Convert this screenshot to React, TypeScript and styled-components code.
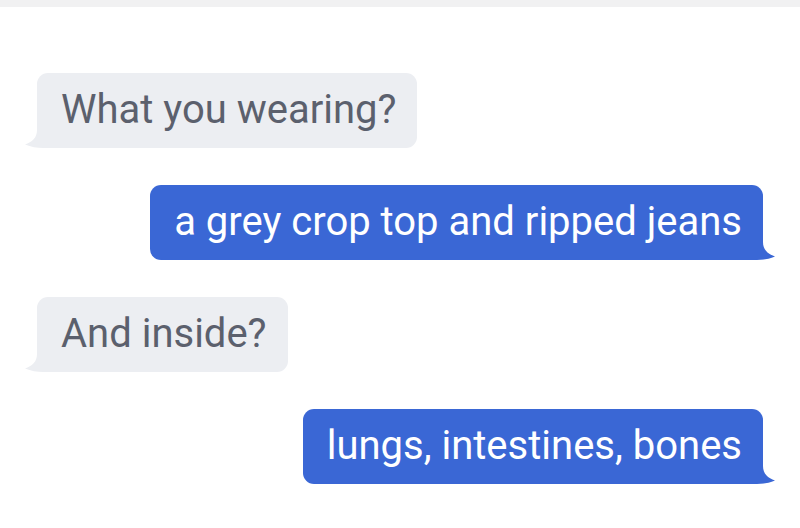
import styled, { createGlobalStyle } from "styled-components";

const GlobalStyle = createGlobalStyle`
  html, body {
    margin: 0;
    padding: 0;
    background: #ffffff;
  }
  body {
    font-family: Roboto, "Liberation Sans", sans-serif;
  }
`;

const Page = styled.div`
  width: 800px;
  height: 528px;
  overflow: hidden;
  background: #ffffff;
  display: flex;
  flex-direction: column;
`;

const TopStrip = styled.div`
  height: 7px;
  background: #f1f1f2;
`;

const Thread = styled.div`
  display: flex;
  flex-direction: column;
  gap: 37px;
  padding: 66px 37px 0 37px;
`;

const Row = styled.div<{ $mine?: boolean }>`
  display: flex;
  justify-content: ${(p) => (p.$mine ? "flex-end" : "flex-start")};
`;

const Bubble = styled.div<{ $mine?: boolean }>`
  position: relative;
  height: 75px;
  box-sizing: border-box;
  display: flex;
  align-items: center;
  padding: 0 21px 2px 24px;
  border-radius: 11px;
  font-size: 40px;
  white-space: nowrap;
  background: ${(p) => (p.$mine ? "#3a67d5" : "#eceef2")};
  color: ${(p) => (p.$mine ? "#ffffff" : "#5b606d")};
`;

const Text = styled.span`
  position: relative;
  z-index: 1;
`;

const TailSvg = styled.svg<{ $mine?: boolean }>`
  position: absolute;
  bottom: 0;
  width: 24px;
  height: 18px;
  ${(p) => (p.$mine ? "right: -12px; transform: scaleX(-1);" : "left: -12px;")}
`;

function Tail({ mine, color }: { mine?: boolean; color: string }) {
  return (
    <TailSvg $mine={mine} viewBox="0 0 24 18">
      <path
        d="M12 0 C12 8 7 12 0 14.5 C6 17 12 18 18 18 L24 18 L24 0 Z"
        fill={color}
      />
    </TailSvg>
  );
}

const messages = [
  { text: "What you wearing?", mine: false },
  { text: "a grey crop top and ripped jeans", mine: true },
  { text: "And inside?", mine: false },
  { text: "lungs, intestines, bones", mine: true },
];

export default function App() {
  return (
    <Page>
      <GlobalStyle />
      <TopStrip />
      <Thread>
        {messages.map((m, i) => (
          <Row key={i} $mine={m.mine}>
            <Bubble $mine={m.mine}>
              <Text>{m.text}</Text>
              <Tail mine={m.mine} color={m.mine ? "#3a67d5" : "#eceef2"} />
            </Bubble>
          </Row>
        ))}
      </Thread>
    </Page>
  );
}
